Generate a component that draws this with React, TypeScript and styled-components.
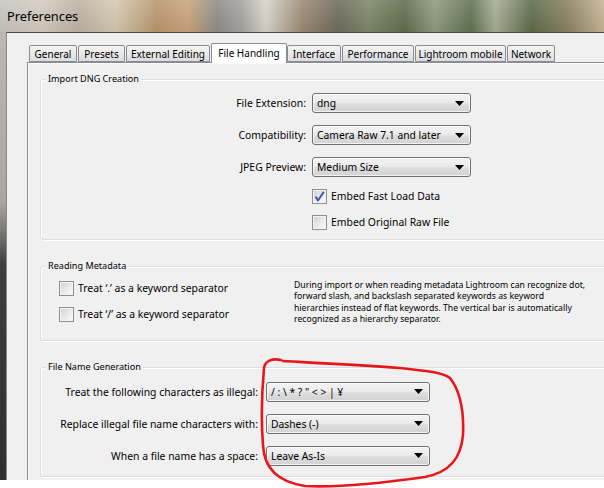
import React from 'react';
import styled, { createGlobalStyle } from 'styled-components';

const GlobalStyle = createGlobalStyle`
  html, body {
    margin: 0;
    padding: 0;
    background: #ffffff;
  }
  body {
    font-family: "Noto Sans", "Liberation Sans", sans-serif;
    color: #000;
  }
`;

const tabs = [
  { label: 'General', width: 48 },
  { label: 'Presets', width: 47 },
  { label: 'External Editing', width: 84 },
  { label: 'File Handling', width: 76, active: true },
  { label: 'Interface', width: 54 },
  { label: 'Performance', width: 72 },
  { label: 'Lightroom mobile', width: 91 },
  { label: 'Network', width: 48 },
];

const Arrow = () => (
  <svg width="9" height="5" viewBox="0 0 9 5">
    <path d="M0 0 H9 L4.5 5 Z" fill="#000" />
  </svg>
);

const Check = () => (
  <svg width="11" height="11" viewBox="0 0 11 11">
    <path
      d="M1.5 5.5 L4 9.5 L9.8 0.8"
      fill="none"
      stroke="#3b5aa0"
      strokeWidth="2"
      strokeLinejoin="round"
    />
  </svg>
);

const Dropdown: React.FC<{ value: string }> = ({ value }) => (
  <Select>
    <SelectText>{value}</SelectText>
    <Arrow />
  </Select>
);

const CheckBox: React.FC<{ checked?: boolean; label: string }> = ({ checked, label }) => (
  <CheckRow>
    <Box>
      <BoxInner>{checked && <Check />}</BoxInner>
    </Box>
    <CheckLabel>{label}</CheckLabel>
  </CheckRow>
);

const App: React.FC = () => (
  <Page>
    <GlobalStyle />
    <TitleBar>
      <Title>Preferences</Title>
    </TitleBar>
    <Middle>
      <Backdrop />
      <Window>
        <TabStrip>
          {tabs.map((t) => (
            <Tab key={t.label} $w={t.width} $active={!!t.active}>
              {t.label}
            </Tab>
          ))}
        </TabStrip>
        <Pane>
          <GroupBox $top={16}>
            <Legend>Import DNG Creation</Legend>
            <DngGrid>
              <FieldLabel>File Extension:</FieldLabel>
              <Dropdown value="dng" />
              <FieldLabel>Compatibility:</FieldLabel>
              <Dropdown value="Camera Raw 7.1 and later" />
              <FieldLabel>JPEG Preview:</FieldLabel>
              <Dropdown value="Medium Size" />
              <span />
              <CheckBox checked label="Embed Fast Load Data" />
              <span />
              <CheckBox label="Embed Original Raw File" />
            </DngGrid>
          </GroupBox>

          <GroupBox $top={26}>
            <Legend>Reading Metadata</Legend>
            <MetaRow>
              <CheckColumn>
                <CheckBox label="Treat ‘.’ as a keyword separator" />
                <CheckBox label="Treat ‘/’ as a keyword separator" />
              </CheckColumn>
              <Description>
                During import or when reading metadata Lightroom can recognize dot,
                <br />
                forward slash, and backslash separated keywords as keyword
                <br />
                hierarchies instead of flat keywords. The vertical bar is automatically
                <br />
                recognized as a hierarchy separator.
              </Description>
            </MetaRow>
          </GroupBox>

          <GroupBox $top={26}>
            <Legend>File Name Generation</Legend>
            <NameGrid>
              <FieldLabel>Treat the following characters as illegal:</FieldLabel>
              <Dropdown value={'/ : \\ * ? " < > | ¥'} />
              <FieldLabel>Replace illegal file name characters with:</FieldLabel>
              <Dropdown value="Dashes (-)" />
              <FieldLabel>When a file name has a space:</FieldLabel>
              <Dropdown value="Leave As-Is" />
            </NameGrid>
          </GroupBox>
        </Pane>
      </Window>
    </Middle>
    <BottomStrip />
    <Annotation width="604" height="488" viewBox="0 0 604 488">
      <path
        d="M281 360 C272 358, 265 361, 264 368 C262 390, 261 420, 263 445 C264 468, 278 482, 305 486 C340 488, 390 482, 425 477 C450 472, 461 458, 463 435 C464 412, 461 392, 450 378 C442 372, 425 371, 400 368 C360 365, 320 363, 283 361"
        fill="none"
        stroke="#e8161b"
        strokeWidth="2.6"
        strokeLinecap="round"
      />
    </Annotation>
  </Page>
);

const Page = styled.div`
  position: relative;
  width: 604px;
  height: 488px;
  overflow: hidden;
  display: flex;
  flex-direction: column;
`;

const TitleBar = styled.div`
  height: 32px;
  flex: none;
  display: flex;
  align-items: center;
  padding-left: 7px;
  background:
    linear-gradient(180deg, rgba(255, 255, 255, 0.12), rgba(0, 0, 0, 0.05)),
    linear-gradient(
      90deg,
      #c7c5c0 0%,
      #d4ccbf 7%,
      #bdb3a4 13%,
      #d6c9b2 19%,
      #b8976c 26%,
      #c9a57c 31%,
      #8f8c87 36%,
      #a5a4a0 40%,
      #d8d4ca 44%,
      #9c8b74 50%,
      #6e6b5c 56%,
      #7d8868 61%,
      #5f6d4d 67%,
      #909b80 72%,
      #617150 78%,
      #a5ad95 82%,
      #5d6b49 88%,
      #8b8262 94%,
      #c9b596 100%
    );
`;

const Title = styled.span`
  font-size: 12.8px;
  color: #000;
`;

const Middle = styled.div`
  display: flex;
  height: 448px;
  flex: none;
  overflow: hidden;
`;

const Backdrop = styled.div`
  width: 6px;
  flex: none;
  background: linear-gradient(
    180deg,
    #bdb8ae 0%,
    #aaa69d 38%,
    #6f6d69 46%,
    #3d3d3d 52%,
    #2f2f2f 100%
  );
`;

const Window = styled.div`
  flex: none;
  width: 640px;
  background: #f0f0f0;
  border-top: 1px solid #4a4a4a;
  border-left: 1px solid #8a8a8a;
  padding-left: 20px;
`;

const TabStrip = styled.div`
  display: flex;
  align-items: flex-end;
  gap: 1px;
  height: 19px;
  margin-top: 10px;
  padding-left: 2px;
`;

const Tab = styled.div<{ $w: number; $active: boolean }>`
  box-sizing: border-box;
  width: ${(p) => p.$w}px;
  height: ${(p) => (p.$active ? 20 : 17)}px;
  margin-bottom: ${(p) => (p.$active ? -1 : 0)}px;
  margin-right: ${(p) => (p.$active ? -1 : 0)}px;
  position: relative;
  z-index: ${(p) => (p.$active ? 1 : 0)};
  border: 1px solid #898c95;
  border-bottom: ${(p) => (p.$active ? 'none' : '1px solid #898c95')};
  border-radius: 2px 2px 0 0;
  background: ${(p) =>
    p.$active ? '#ffffff' : 'linear-gradient(180deg, #f4f4f4 0%, #e9e9e9 50%, #dcdcdc 100%)'};
  font-size: 10px;
  line-height: ${(p) => (p.$active ? 18 : 16)}px;
  text-align: center;
  white-space: nowrap;
`;

const Pane = styled.div`
  box-sizing: border-box;
  height: 500px;
  border: 1px solid #898c95;
  border-bottom: none;
  background: #f0f0f0;
  box-shadow: inset 1px 1px 0 #fdfdfd;
  padding: 0 12px;
  overflow: hidden;
`;

const GroupBox = styled.div<{ $top: number }>`
  margin-top: ${(p) => p.$top}px;
  border: 1px solid #d5dfe5;
  border-radius: 3px;
  box-shadow: 1px 1px 0 #ffffff, inset 1px 1px 0 #ffffff;
`;

const Legend = styled.div`
  width: fit-content;
  margin: -8px 0 0 5px;
  padding: 0 2px;
  height: 13px;
  line-height: 13px;
  font-size: 9.1px;
  background: #f0f0f0;
  white-space: nowrap;
`;

const DngGrid = styled.div`
  display: grid;
  grid-template-columns: 265px 159px;
  grid-template-rows: repeat(3, 20px) 14px 15px;
  column-gap: 6px;
  row-gap: 12px;
  align-items: start;
  padding: 8px 0 9px;
`;

const NameGrid = styled.div`
  display: grid;
  grid-template-columns: 217px 164px;
  grid-auto-rows: 20px;
  column-gap: 8px;
  row-gap: 12px;
  padding: 9px 0 10px;
`;

const FieldLabel = styled.div`
  text-align: right;
  font-size: 10.4px;
  line-height: 20px;
  white-space: nowrap;
`;

const Select = styled.div`
  box-sizing: border-box;
  height: 20px;
  display: flex;
  align-items: center;
  justify-content: space-between;
  padding: 0 6px 0 4px;
  border: 1px solid #707070;
  border-radius: 3px;
  background: linear-gradient(180deg, #f3f3f3 0%, #ececec 45%, #dedede 55%, #d2d2d2 100%);
  box-shadow: inset 0 0 0 1px rgba(255, 255, 255, 0.7);
`;

const SelectText = styled.span`
  font-size: 10.3px;
  white-space: nowrap;
`;

const CheckRow = styled.div`
  display: flex;
  align-items: center;
  gap: 4px;
  height: 15px;
`;

const Box = styled.div`
  box-sizing: border-box;
  width: 15px;
  height: 15px;
  flex: none;
  border: 1px solid #8e8f8f;
  background: #f4f4f4;
  padding: 1px;
`;

const BoxInner = styled.div`
  width: 11px;
  height: 11px;
  background: linear-gradient(135deg, #d3d3d3 0%, #ececec 60%, #f9f9f9 100%);
  display: flex;
`;

const CheckLabel = styled.span`
  font-size: 10.4px;
  line-height: 15px;
  white-space: nowrap;
`;

const MetaRow = styled.div`
  display: flex;
  padding: 9px 0 14px;
`;

const CheckColumn = styled.div`
  box-sizing: border-box;
  width: 253px;
  flex: none;
  padding-left: 18px;
  display: flex;
  flex-direction: column;
  gap: 11px;
`;

const Description = styled.div`
  margin-top: -1px;
  font-size: 8.7px;
  line-height: 11.4px;
  white-space: nowrap;
`;

const BottomStrip = styled.div`
  flex: 1;
  background: #ffffff;
`;

const Annotation = styled.svg`
  position: absolute;
  left: 0;
  top: 0;
  pointer-events: none;
`;

export default App;
